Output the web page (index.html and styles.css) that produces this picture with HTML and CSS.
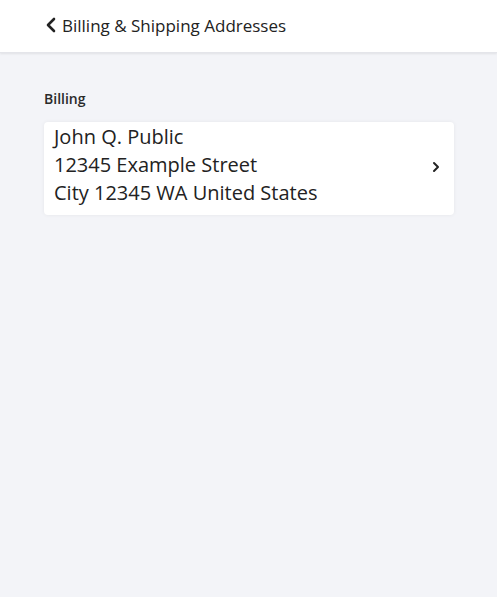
FILE: index.html
```html
<!DOCTYPE html>
<html>
<head>
<meta charset="utf-8">
<link rel="stylesheet" href="styles.css">
</head>
<body>
<header class="topbar">
  <a class="back">
    <svg class="back-icon" viewBox="0 0 12 16" width="12" height="16"><path d="M9 2 L3 8 L9 14" fill="none" stroke="#222" stroke-width="2.6" stroke-linecap="round" stroke-linejoin="round"/></svg>
    <span class="title">Billing &amp; Shipping Addresses</span>
  </a>
</header>
<main class="content">
  <div class="label">Billing</div>
  <div class="card">
    <div class="address">
      <div>John Q. Public</div>
      <div>12345 Example Street</div>
      <div>City 12345 WA United States</div>
    </div>
    <svg class="chev" viewBox="0 0 8 12" width="8" height="12"><path d="M2 2 L6 6 L2 10" fill="none" stroke="#222" stroke-width="2" stroke-linecap="round" stroke-linejoin="round"/></svg>
  </div>
</main>
</body>
</html>
```
FILE: styles.css
```css
html, body {
  margin: 0;
  padding: 0;
  height: 100%;
}
body {
  background: #f3f4f8;
  font-family: "Open Sans", "Noto Sans", sans-serif;
  color: #222;
}
.topbar {
  background: #fff;
  height: 53px;
  box-shadow: 0 1px 2px rgba(0,0,0,0.08);
  border-bottom: 1px solid #e4e5ea;
  box-sizing: border-box;
  display: flex;
  align-items: center;
  padding-left: 45px;
  padding-bottom: 2px;
}
.back {
  display: flex;
  align-items: center;
  gap: 5px;
}
.title {
  font-size: 17px;
  color: #222;
}
.content {
  padding: 36px 43px 0 44px;
}
.label {
  font-size: 14px;
  font-weight: 600;
  color: #2a2a2a;
  margin-bottom: 14px;
}
.card {
  background: #fff;
  border-radius: 4px;
  box-shadow: 0 0 4px rgba(0,0,0,0.06);
  display: flex;
  align-items: center;
  justify-content: space-between;
  padding: 1px 14px 8px 10px;
}
.address {
  font-size: 20px;
  line-height: 28px;
  color: #222;
}
.chev {
  display: block;
  margin-top: 4px;
}
```
